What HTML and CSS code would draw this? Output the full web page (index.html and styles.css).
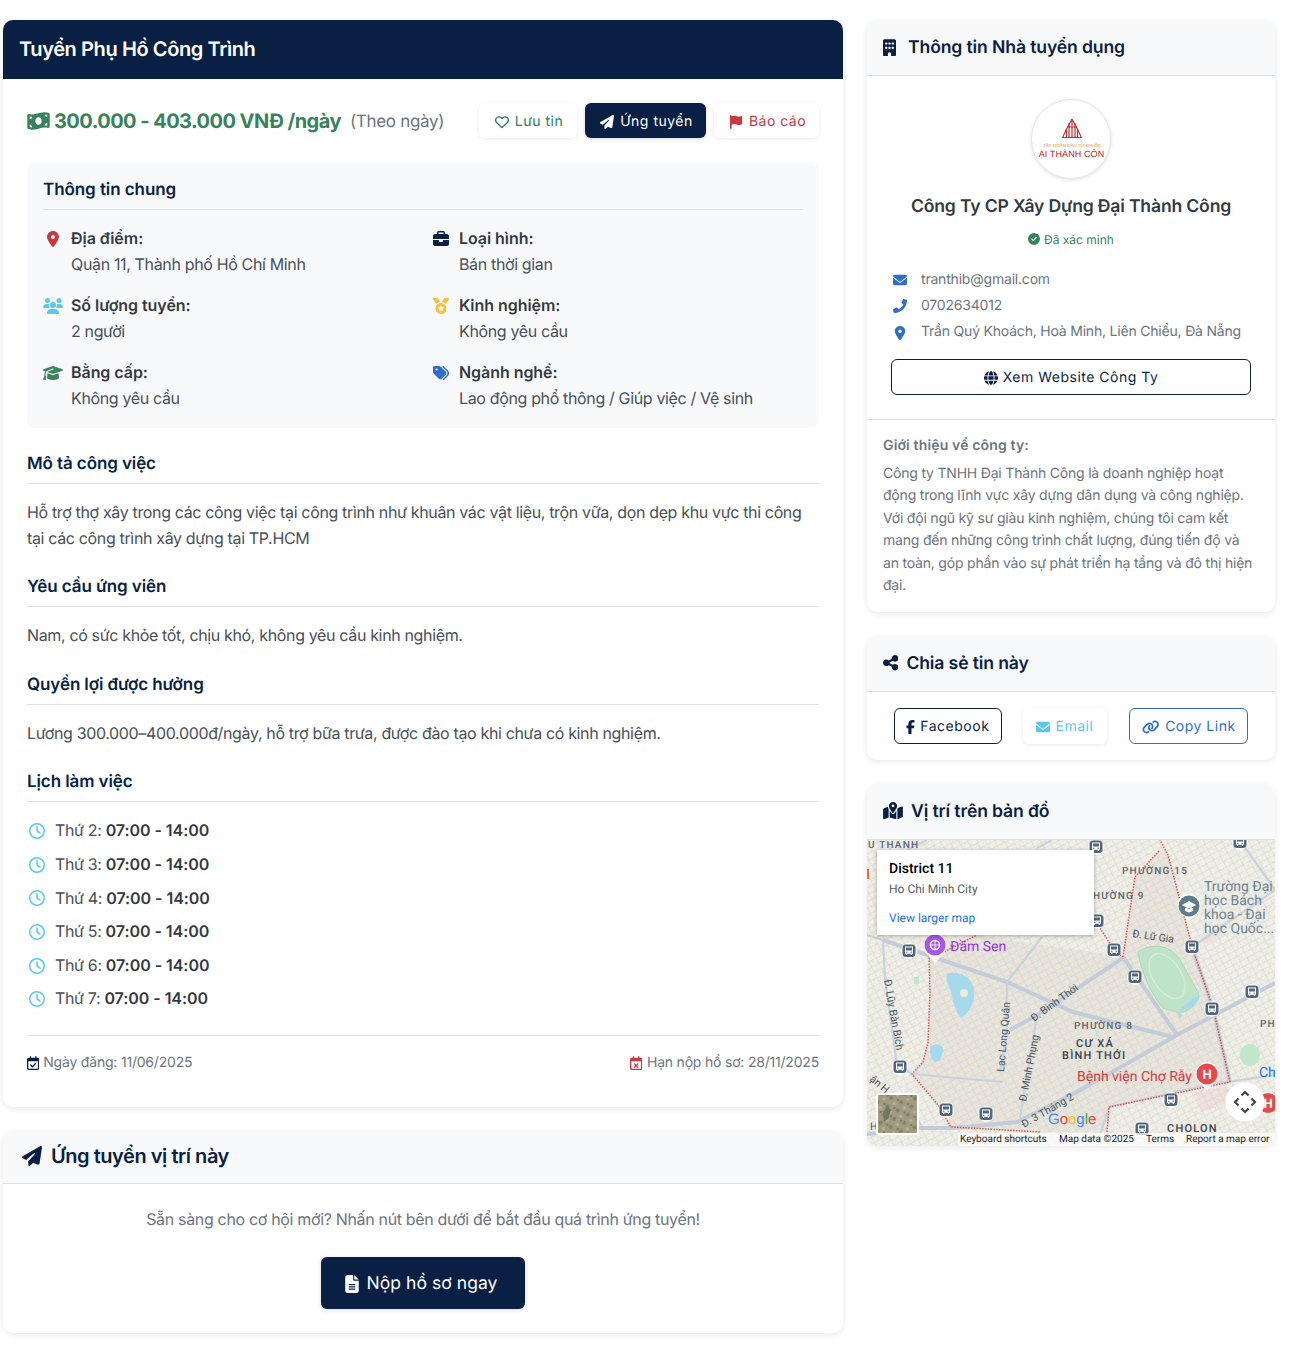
FILE: index.html
```html
<!DOCTYPE html>
<html lang="vi">
<head>
<meta charset="utf-8">
<title>Tuyển Phụ Hồ Công Trình</title>
<link rel="stylesheet" href="styles.css">
</head>
<body>
<svg class="sprite" aria-hidden="true">
<symbol id="i-pin" viewBox="0 0 384 512"><path d="M215.7 499.2C267 435 384 279.4 384 192C384 86 298 0 192 0S0 86 0 192c0 87.4 117 243 168.3 307.2c12.3 15.3 35.1 15.3 47.4 0zM192 128a64 64 0 1 1 0 128 64 64 0 1 1 0-128z"/></symbol>
<symbol id="i-plane" viewBox="0 0 512 512"><path d="M498.1 5.6c10.1 7 15.4 19.1 13.5 31.2l-64 416c-1.5 9.7-7.4 18.2-16 23s-18.9 5.4-28 1.6L284 427.7l-68.5 74.1c-8.9 9.7-22.9 12.9-35.2 8.1S160 493.2 160 480V396.4c0-4 1.5-7.8 4.2-10.7L331.8 202.8c5.8-6.3 5.6-16-.4-22s-15.7-6.4-22-.7L106 360.8 17.7 316.6C7.1 311.3 .3 300.7 0 288.9s5.9-22.8 16.1-28.7l448-256c10.7-6.1 23.9-5.5 34 1.4z"/></symbol>
<symbol id="i-heart" viewBox="0 0 512 512"><path d="M225.8 468.2l-2.5-2.3L48.1 303.2C17.4 274.7 0 234.7 0 192.8v-3.3c0-70.4 50-130.8 119.2-144C158.6 37.9 198.9 47 231 69.6c9 6.4 17.4 13.8 25 22.3c4.2-4.8 8.7-9.2 13.5-13.3c3.7-3.2 7.5-6.2 11.5-9C313.1 47 353.4 37.9 392.8 45.4C462 58.6 512 119.1 512 189.5v3.3c0 41.9-17.4 81.9-48.1 110.4L288.7 465.9l-2.5 2.3c-8.2 7.6-19 11.9-30.2 11.9s-22-4.2-30.2-11.9zM239.1 145c-.4-.3-.7-.7-1-1.1l-17.8-20c0 0-.1-.1-.1-.1c-23.1-25.9-58-37.7-92-31.2C81.6 101.5 48 142.1 48 189.5v3.3c0 28.5 11.9 55.8 32.8 75.2L256 430.7 431.2 268c20.9-19.4 32.8-46.7 32.8-75.2v-3.3c0-47.3-33.6-88-80.1-96.9c-34-6.5-69 5.4-92 31.2c0 0 0 0-.1 .1s0 0-.1 .1l-17.8 20c-.3 .4-.7 .7-1 1.1c-4.5 4.5-10.6 7-16.9 7s-12.4-2.5-16.9-7z"/></symbol>
<symbol id="i-flag" viewBox="0 0 448 512"><path d="M64 32C64 14.3 49.7 0 32 0S0 14.3 0 32V64 368 480c0 17.7 14.3 32 32 32s32-14.3 32-32V352l64.3-16.1c41.1-10.3 84.6-5.5 122.5 13.4c44.2 22.1 95.5 24.8 141.7 7.4l34.7-13c12.5-4.7 20.8-16.6 20.8-30V66.1c0-23-24.2-38-44.8-27.7l-9.6 4.8c-46.3 23.2-100.8 23.2-147.1 0c-35.1-17.6-75.4-22-113.5-12.5L64 48V32z"/></symbol>
<symbol id="i-env" viewBox="0 0 512 512"><path d="M48 64C21.5 64 0 85.5 0 112c0 15.1 7.1 29.3 19.2 38.4L236.8 313.6c11.4 8.5 27 8.5 38.4 0L492.8 150.4c12.1-9.1 19.2-23.3 19.2-38.4c0-26.5-21.5-48-48-48H48zM0 176V384c0 35.3 28.7 64 64 64H448c35.3 0 64-28.7 64-64V176L294.4 339.2c-22.8 17.1-54 17.1-76.8 0L0 176z"/></symbol>
<symbol id="i-phone" viewBox="0 0 512 512"><path d="M493.4 24.6l-104-24c-11.3-2.6-22.9 3.3-27.5 13.9l-48 112c-4.2 9.8-1.4 21.3 6.9 28l60.6 49.6c-36 76.7-98.9 140.5-177.2 177.2l-49.6-60.6c-6.8-8.3-18.2-11.1-28-6.9l-112 48C3.9 366.5-2 378.1.6 389.4l24 104C27.1 504.2 36.7 512 48 512c256.1 0 464-207.5 464-464 0-11.2-7.7-20.9-18.6-23.4z"/></symbol>
<symbol id="i-share" viewBox="0 0 448 512"><path d="M352 224c53 0 96-43 96-96s-43-96-96-96s-96 43-96 96c0 4 .2 8 .7 11.9l-94.1 47C145.4 170.2 121.9 160 96 160c-53 0-96 43-96 96s43 96 96 96c25.9 0 49.4-10.2 66.6-26.9l94.1 47c-.5 3.9-.7 7.8-.7 11.9c0 53 43 96 96 96s96-43 96-96s-43-96-96-96c-25.9 0-49.4 10.2-66.6 26.9l-94.1-47c.5-3.9 .7-7.8 .7-11.9s-.2-8-.7-11.9l94.1-47C302.6 213.8 326.1 224 352 224z"/></symbol>
<symbol id="i-fb" viewBox="0 0 320 512"><path d="M80 299.3V512H196V299.3h86.5l18-97.8H196V166.9c0-51.7 20.3-71.5 72.7-71.5c16.3 0 29.4 .4 37 1.2V7.9C291.4 4 256.4 0 236.2 0C129.3 0 80 50.5 80 159.4v42.1H14v97.8H80z"/></symbol>
<symbol id="i-check" viewBox="0 0 512 512"><path d="M256 512A256 256 0 1 0 256 0a256 256 0 1 0 0 512zM369 209L241 337c-9.4 9.4-24.6 9.4-33.9 0l-64-64c-9.4-9.4-9.4-24.6 0-33.9s24.6-9.4 33.9 0l47 47L335 175c9.4-9.4 24.6-9.4 33.9 0s9.4 24.6 0 33.9z"/></symbol>
<symbol id="i-clock" viewBox="0 0 512 512"><path d="M464 256A208 208 0 1 1 48 256a208 208 0 1 1 416 0zM0 256a256 256 0 1 0 512 0A256 256 0 1 0 0 256zM232 120V256c0 8 4 15.5 10.7 20l96 64c11 7.4 25.9 4.4 33.3-6.7s4.4-25.9-6.7-33.3L280 243.2V120c0-13.3-10.7-24-24-24s-24 10.7-24 24z"/></symbol>
<symbol id="i-file" viewBox="0 0 384 512"><path d="M64 0C28.7 0 0 28.7 0 64V448c0 35.3 28.7 64 64 64H320c35.3 0 64-28.7 64-64V160H256c-17.7 0-32-14.3-32-32V0H64zM256 0V128H384L256 0zM112 256H272c8.8 0 16 7.2 16 16s-7.2 16-16 16H112c-8.8 0-16-7.2-16-16s7.2-16 16-16zm0 64H272c8.8 0 16 7.2 16 16s-7.2 16-16 16H112c-8.8 0-16-7.2-16-16s7.2-16 16-16zm0 64H272c8.8 0 16 7.2 16 16s-7.2 16-16 16H112c-8.8 0-16-7.2-16-16s7.2-16 16-16z"/></symbol>
<symbol id="i-building" viewBox="0 0 384 512"><path d="M48 0C21.5 0 0 21.5 0 48V464c0 26.5 21.5 48 48 48h96V432c0-26.5 21.5-48 48-48s48 21.5 48 48v80h96c26.5 0 48-21.5 48-48V48c0-26.5-21.5-48-48-48H48zM64 240c0-8.8 7.2-16 16-16h32c8.8 0 16 7.2 16 16v32c0 8.8-7.2 16-16 16H80c-8.8 0-16-7.2-16-16V240zm112-16h32c8.8 0 16 7.2 16 16v32c0 8.8-7.2 16-16 16H176c-8.8 0-16-7.2-16-16V240c0-8.8 7.2-16 16-16zm80 16c0-8.8 7.2-16 16-16h32c8.8 0 16 7.2 16 16v32c0 8.8-7.2 16-16 16H272c-8.8 0-16-7.2-16-16V240zM80 96h32c8.8 0 16 7.2 16 16v32c0 8.8-7.2 16-16 16H80c-8.8 0-16-7.2-16-16V112c0-8.8 7.2-16 16-16zm80 16c0-8.8 7.2-16 16-16h32c8.8 0 16 7.2 16 16v32c0 8.8-7.2 16-16 16H176c-8.8 0-16-7.2-16-16V112zM272 96h32c8.8 0 16 7.2 16 16v32c0 8.8-7.2 16-16 16H272c-8.8 0-16-7.2-16-16V112c0-8.8 7.2-16 16-16z"/></symbol>
<symbol id="i-case" viewBox="0 0 512 512"><path d="M184 48H328c4.4 0 8 3.6 8 8V96H176V56c0-4.4 3.6-8 8-8zm-56 8V96H64C28.7 96 0 124.7 0 160v96H192 320 512V160c0-35.3-28.7-64-64-64H384V56c0-30.9-25.1-56-56-56H184c-30.9 0-56 25.1-56 56zM512 288H320v32c0 17.7-14.3 32-32 32H224c-17.7 0-32-14.3-32-32V288H0V416c0 35.3 28.7 64 64 64H448c35.3 0 64-28.7 64-64V288z"/></symbol>
<symbol id="i-users" viewBox="0 0 640 512"><path d="M144 0a80 80 0 1 1 0 160A80 80 0 1 1 144 0zM512 0a80 80 0 1 1 0 160A80 80 0 1 1 512 0zM0 298.7C0 239.8 47.8 192 106.7 192h42.7c15.9 0 31 3.5 44.6 9.7c-1.3 7.2-1.9 14.7-1.9 22.3c0 38.2 16.8 72.5 43.3 96c-.2 0-.4 0-.7 0H21.3C9.6 320 0 310.4 0 298.7zM405.3 320c-.2 0-.4 0-.7 0c26.6-23.5 43.3-57.8 43.3-96c0-7.6-.7-15-1.9-22.3c13.6-6.3 28.7-9.7 44.6-9.7h42.7C592.2 192 640 239.8 640 298.7c0 11.8-9.6 21.3-21.3 21.3H405.3zM224 224a96 96 0 1 1 192 0 96 96 0 1 1 -192 0zM128 485.3C128 411.7 187.7 352 261.3 352H378.7C452.3 352 512 411.7 512 485.3c0 14.7-11.9 26.7-26.7 26.7H154.7c-14.7 0-26.7-11.9-26.7-26.7z"/></symbol>
<symbol id="i-grad" viewBox="0 0 640 512"><path d="M320 32c-8.1 0-16.1 1.4-23.7 4.1L15.8 137.4C6.3 140.9 0 149.9 0 160s6.3 19.1 15.8 22.6l57.9 20.9C57.3 229.3 48 259.8 48 291.9v28.1c0 28.4-10.8 57.7-22.3 80.8c-6.5 13-13.9 25.8-22.5 37.6C0 442.7-.9 448.3 .9 453.4s6 8.9 11.2 10.2l64 16c4.2 1.1 8.7 .3 12.4-2s6.3-6.1 7.1-10.4c8.6-42.8 4.3-81.2-2.1-108.7C90.3 344.3 86 329.8 80 316.5V291.9c0-30.2 10.2-58.7 27.9-81.5c12.9-15.5 29.6-28 49.2-35.7l157-61.7c8.2-3.2 17.5 .8 20.7 9s-.8 17.5-9 20.7l-157 61.7c-12.4 4.9-23.3 12.4-32.2 21.6l159.6 57.6c7.6 2.7 15.6 4.1 23.7 4.1s16.1-1.4 23.7-4.1L624.2 182.6c9.5-3.4 15.8-12.5 15.8-22.6s-6.3-19.1-15.8-22.6L343.7 36.1C336.1 33.4 328.1 32 320 32zM128 408c0 35.3 86 72 192 72s192-36.7 192-72L496.7 262.6 354.5 314c-11.1 4-22.8 6-34.5 6s-23.5-2-34.5-6L143.3 262.6 128 408z"/></symbol>
<symbol id="i-tags" viewBox="0 0 512 512"><path d="M345 39.1L472.8 168.4c52.4 53 52.4 138.2 0 191.2L360.8 472.9c-9.3 9.4-24.5 9.5-33.9 .2s-9.5-24.5-.2-33.9L438.6 325.9c33.9-34.3 33.9-89.4 0-123.7L310.9 72.9c-9.3-9.4-9.2-24.6 .2-33.9s24.6-9.2 33.9 .2zM0 229.5V80C0 53.5 21.5 32 48 32H197.5c17 0 33.3 6.7 45.3 18.7l168 168c25 25 25 65.5 0 90.5L277.3 442.7c-25 25-65.5 25-90.5 0l-168-168C6.7 262.7 0 246.5 0 229.5zM144 144a32 32 0 1 0 -64 0 32 32 0 1 0 64 0z"/></symbol>
<symbol id="i-medal" viewBox="0 0 512 512"><path d="M4.1 38.2C1.4 34.2 0 29.4 0 24.6C0 11 11 0 24.6 0H133.9c11.2 0 21.7 5.9 27.4 15.5l68.5 114.1c-48.2 6.1-91.3 28.6-123.4 61.9L4.1 38.2zm503.7 0L405.6 191.5c-32.1-33.3-75.2-55.8-123.4-61.9L350.7 15.5C356.5 5.9 366.9 0 378.1 0H487.4C501 0 512 11 512 24.6c0 4.8-1.4 9.6-4.1 13.6zM80 336a176 176 0 1 1 352 0A176 176 0 1 1 80 336zm184.4-94.9c-3.4-7-13.3-7-16.8 0l-22.4 45.4c-1.4 2.8-4 4.7-7 5.1L168 298.9c-7.7 1.1-10.7 10.5-5.2 16l36.3 35.4c2.2 2.2 3.2 5.2 2.7 8.3l-8.6 49.9c-1.3 7.6 6.7 13.5 13.6 9.9l44.8-23.6c2.7-1.4 6-1.4 8.7 0l44.8 23.6c6.9 3.6 14.9-2.2 13.6-9.9l-8.6-49.9c-.5-3 .5-6.1 2.7-8.3l36.3-35.4c5.6-5.4 2.5-14.8-5.2-16l-50.1-7.3c-3-.4-5.7-2.4-7-5.1l-22.4-45.4z"/></symbol>
<symbol id="i-money" viewBox="0 0 576 512"><path d="M0 112.5V422.3c0 18 10.1 35 27 41.3c87 32.5 174 10.3 261-11.9c79.8-20.3 159.6-40.7 239.3-18.9c23 6.3 48.7-9.5 48.7-33.4V89.7c0-18-10.1-35-27-41.3C462 15.9 375 38.1 288 60.3C208.2 80.6 128.4 100.9 48.7 79.1C25.6 72.8 0 88.6 0 112.5zM288 352c-44.2 0-80-43-80-96s35.8-96 80-96s80 43 80 96s-35.8 96-80 96zM64 352c35.3 0 64 28.7 64 64H64V352zm64-208c0 35.3-28.7 64-64 64V144h64zM512 304v64H448c0-35.3 28.7-64 64-64zM448 96h64v64c-35.3 0-64-28.7-64-64z"/></symbol>
<symbol id="i-calcheck" viewBox="0 0 448 512"><path d="M128 0c13.3 0 24 10.7 24 24V64H296V24c0-13.3 10.7-24 24-24s24 10.7 24 24V64h40c35.3 0 64 28.7 64 64v16 48V448c0 35.3-28.7 64-64 64H64c-35.3 0-64-28.7-64-64V192 144 128C0 92.7 28.7 64 64 64h40V24c0-13.3 10.7-24 24-24zM400 192H48V448c0 8.8 7.2 16 16 16H384c8.8 0 16-7.2 16-16V192zM329 297L217 409c-9.4 9.4-24.6 9.4-33.9 0l-64-64c-9.4-9.4-9.4-24.6 0-33.9s24.6-9.4 33.9 0l47 47 95-95c9.4-9.4 24.6-9.4 33.9 0s9.4 24.6 0 33.9z"/></symbol>
<symbol id="i-calx" viewBox="0 0 448 512"><path d="M128 0c13.3 0 24 10.7 24 24V64H296V24c0-13.3 10.7-24 24-24s24 10.7 24 24V64h40c35.3 0 64 28.7 64 64v16 48V448c0 35.3-28.7 64-64 64H64c-35.3 0-64-28.7-64-64V192 144 128C0 92.7 28.7 64 64 64h40V24c0-13.3 10.7-24 24-24zM400 192H48V448c0 8.8 7.2 16 16 16H384c8.8 0 16-7.2 16-16V192zM305 305c9.4-9.4 9.4-24.6 0-33.9s-24.6-9.4-33.9 0l-47 47-47-47c-9.4-9.4-24.6-9.4-33.9 0s-9.4 24.6 0 33.9l47 47-47 47c-9.4 9.4-9.4 24.6 0 33.9s24.6 9.4 33.9 0l47-47 47 47c9.4 9.4 24.6 9.4 33.9 0s9.4-24.6 0-33.9l-47-47 47-47z"/></symbol>
<symbol id="i-globe" viewBox="0 0 512 512"><path d="M352 256c0 22.2-1.2 43.6-3.3 64H163.3c-2.2-20.4-3.3-41.8-3.3-64s1.2-43.6 3.3-64H348.7c2.2 20.4 3.3 41.8 3.3 64zm28.8-64H503.9c5.3 20.5 8.1 41.9 8.1 64s-2.8 43.5-8.1 64H380.8c2.1-20.6 3.2-42 3.2-64s-1.1-43.4-3.2-64zm112.6-32H376.7c-10-63.9-29.8-117.4-55.3-151.6c78.3 20.7 142 77.5 171.9 151.6zm-149.1 0H167.7c6.1-36.4 15.5-68.6 27-94.7c10.5-23.6 22.2-40.7 33.5-51.5C239.4 3.2 248.7 0 256 0s16.6 3.2 27.8 13.8c11.3 10.8 23 27.9 33.5 51.5c11.6 26 20.9 58.2 27 94.7zm-209 0H18.6C48.6 85.9 112.2 29.1 190.6 8.4C165.1 42.6 145.3 96.1 135.3 160zM8.1 192H131.2c-2.1 20.6-3.2 42-3.2 64s1.1 43.4 3.2 64H8.1C2.8 299.5 0 278.1 0 256s2.8-43.5 8.1-64zM194.7 446.6c-11.6-26-20.9-58.2-27-94.6H344.3c-6.1 36.4-15.5 68.6-27 94.6c-10.5 23.6-22.2 40.7-33.5 51.5C272.6 508.8 263.3 512 256 512s-16.6-3.2-27.8-13.8c-11.3-10.8-23-27.9-33.5-51.5zM135.3 352c10 63.9 29.8 117.4 55.3 151.6C112.2 482.9 48.6 426.1 18.6 352H135.3zm358.1 0c-30 74.1-93.6 130.9-171.9 151.6c25.5-34.2 45.2-87.7 55.3-151.6H493.4z"/></symbol>
<symbol id="i-link" viewBox="0 0 640 512"><path d="M579.8 267.7c56.5-56.5 56.5-148 0-204.5c-50-50-128.8-56.5-186.3-15.4l-1.6 1.1c-14.4 10.3-17.7 30.3-7.4 44.6s30.3 17.7 44.6 7.4l1.6-1.1c32.1-22.9 76-19.3 103.8 8.6c31.5 31.5 31.5 82.5 0 114L422.3 334.8c-31.5 31.5-82.5 31.5-114 0c-27.9-27.9-31.5-71.8-8.6-103.8l1.1-1.6c10.3-14.4 6.9-34.4-7.4-44.6s-34.4-6.9-44.6 7.4l-1.1 1.6C206.5 251.2 213 330 263 380c56.5 56.5 148 56.5 204.5 0L579.8 267.7zM60.2 244.3c-56.5 56.5-56.5 148 0 204.5c50 50 128.8 56.5 186.3 15.4l1.6-1.1c14.4-10.3 17.7-30.3 7.4-44.6s-30.3-17.7-44.6-7.4l-1.6 1.1c-32.1 22.9-76 19.3-103.8-8.6C74 372 74 321 105.5 289.5L217.7 177.2c31.5-31.5 82.5-31.5 114 0c27.9 27.9 31.5 71.8 8.6 103.9l-1.1 1.6c-10.3 14.4-6.9 34.4 7.4 44.6s34.4 6.9 44.6-7.4l1.1-1.6C433.5 260.8 427 182 377 132c-56.5-56.5-148-56.5-204.5 0L60.2 244.3z"/></symbol>
<symbol id="i-map" viewBox="0 0 576 512"><path d="M408 120c0 54.6-73.1 151.9-105.2 192c-7.7 9.6-22 9.6-29.6 0C241.1 271.9 168 174.6 168 120C168 53.7 221.7 0 288 0s120 53.7 120 120zm8 80.4c3.5-6.9 6.7-13.8 9.6-20.6c.5-1.2 1-2.5 1.5-3.7l116-46.4C558.9 123.4 576 135 576 152V422.8c0 9.8-6 18.6-15.1 22.3L416 503V200.4zM137.6 138.3c2.4 14.1 7.2 28.3 12.8 41.5c2.9 6.8 6.1 13.7 9.6 20.6V451.8L32.9 502.7C17.1 509 0 497.4 0 480.4V209.6c0-9.8 6-18.6 15.1-22.3l122.6-49zM327.8 332c13.9-17.4 35.7-45.7 56.2-77V504.3L192 449.4V255c20.5 31.3 42.3 59.6 56.2 77c20.5 25.6 59.1 25.6 79.6 0zM288 152a40 40 0 1 0 0-80 40 40 0 1 0 0 80z"/></symbol>
<symbol id="m-bus" viewBox="-8 -8 16 16" overflow="visible"><circle r="8" fill="#fff" opacity=".8"/><rect x="-6.500" y="-6.500" width="13" height="12.500" rx="3.500" fill="#53667f"/><path d="M-4-4.500H4V2.800H3V4H1.800V2.800H-1.800V4H-3V2.800H-4Z" fill="#fff"/><rect x="-3" y="-3.500" width="6" height="3" fill="#53667f"/><circle cx="-2.200" cy="1.300" r=".7" fill="#53667f"/><circle cx="2.200" cy="1.300" r=".7" fill="#53667f"/></symbol>
</svg>

<main class="page">
  <div class="col">
    <section class="card job">
      <h1 class="job-title">Tuyển Phụ Hồ Công Trình</h1>
      <div class="job-body">
        <div class="price-row">
          <div class="price-wrap">
            <svg class="ic ic-money"><use href="#i-money"/></svg>
            <span class="price">300.000 - 403.000 VNĐ /ngày</span>
            <span class="price-type">(Theo ngày)</span>
          </div>
          <div class="actions">
            <a class="btn btn-ghost btn-save"><svg class="ic"><use href="#i-heart"/></svg>Lưu tin</a>
            <a class="btn btn-dark"><svg class="ic"><use href="#i-plane"/></svg>Ứng tuyển</a>
            <a class="btn btn-ghost btn-report"><svg class="ic"><use href="#i-flag"/></svg>Báo cáo</a>
          </div>
        </div>

        <div class="panel">
          <h2 class="panel-title">Thông tin chung</h2>
          <div class="facts">
            <div class="fact"><span class="fact-ic red"><svg class="ic"><use href="#i-pin"/></svg></span><div><b>Địa điểm:</b><br>Quận 11, Thành phố Hồ Chí Minh</div></div>
            <div class="fact"><span class="fact-ic navy"><svg class="ic"><use href="#i-case"/></svg></span><div><b>Loại hình:</b><br>Bán thời gian</div></div>
            <div class="fact"><span class="fact-ic sky"><svg class="ic ic-wide"><use href="#i-users"/></svg></span><div><b>Số lượng tuyển:</b><br>2 người</div></div>
            <div class="fact"><span class="fact-ic gold"><svg class="ic"><use href="#i-medal"/></svg></span><div><b>Kinh nghiệm:</b><br>Không yêu cầu</div></div>
            <div class="fact"><span class="fact-ic green"><svg class="ic ic-wide"><use href="#i-grad"/></svg></span><div><b>Bằng cấp:</b><br>Không yêu cầu</div></div>
            <div class="fact"><span class="fact-ic blue"><svg class="ic"><use href="#i-tags"/></svg></span><div><b>Ngành nghề:</b><br>Lao động phổ thông / Giúp việc / Vệ sinh</div></div>
          </div>
        </div>

        <h3 class="sec-title">Mô tả công việc</h3>
        <p class="sec-text">Hỗ trợ thợ xây trong các công việc tại công trình như khuân vác vật liệu, trộn vữa, dọn dẹp khu vực thi công tại các công trình xây dựng tại TP.HCM</p>
        <h3 class="sec-title">Yêu cầu ứng viên</h3>
        <p class="sec-text">Nam, có sức khỏe tốt, chịu khó, không yêu cầu kinh nghiệm.</p>
        <h3 class="sec-title">Quyền lợi được hưởng</h3>
        <p class="sec-text">Lương 300.000–400.000đ/ngày, hỗ trợ bữa trưa, được đào tạo khi chưa có kinh nghiệm.</p>
        <h3 class="sec-title">Lịch làm việc</h3>
        <ul class="schedule">
          <li><svg class="ic"><use href="#i-clock"/></svg>Thứ 2:&nbsp;<b>07:00 - 14:00</b></li>
          <li><svg class="ic"><use href="#i-clock"/></svg>Thứ 3:&nbsp;<b>07:00 - 14:00</b></li>
          <li><svg class="ic"><use href="#i-clock"/></svg>Thứ 4:&nbsp;<b>07:00 - 14:00</b></li>
          <li><svg class="ic"><use href="#i-clock"/></svg>Thứ 5:&nbsp;<b>07:00 - 14:00</b></li>
          <li><svg class="ic"><use href="#i-clock"/></svg>Thứ 6:&nbsp;<b>07:00 - 14:00</b></li>
          <li><svg class="ic"><use href="#i-clock"/></svg>Thứ 7:&nbsp;<b>07:00 - 14:00</b></li>
        </ul>
        <div class="dates">
          <span class="date"><svg class="ic navy"><use href="#i-calcheck"/></svg>Ngày đăng: 11/06/2025</span>
          <span class="date date-end"><svg class="ic red"><use href="#i-calx"/></svg>Hạn nộp hồ sơ: 28/11/2025</span>
        </div>
      </div>
    </section>

    <section class="card apply">
      <header class="card-head head-apply"><svg class="ic"><use href="#i-plane"/></svg><h2>Ứng tuyển vị trí này</h2></header>
      <div class="apply-body">
        <p>Sẵn sàng cho cơ hội mới? Nhấn nút bên dưới để bắt đầu quá trình ứng tuyển!</p>
        <a class="btn btn-dark btn-lg"><svg class="ic"><use href="#i-file"/></svg>Nộp hồ sơ ngay</a>
      </div>
    </section>
  </div>

  <aside class="col">
    <section class="card">
      <header class="card-head"><svg class="ic ic-b"><use href="#i-building"/></svg><h2>Thông tin Nhà tuyển dụng</h2></header>
      <div class="company">
        <div class="logo">
          <svg viewBox="0 0 78 78" class="logo-svg">
            <g fill="none" stroke="#b9312f" stroke-width="1.200">
              <path d="M40 19C37 25 33 31 31 37M40 19C43 25 47 31 49 37"/>
              <path d="M37 23V37M40 20V37M43 23V37M34.500 29V37M45.500 29V37"/>
              <path d="M30 37.500H50M35 27H45"/>
            </g>
            <text x="40" y="47" class="logo-small">TẬP ĐOÀN ĐẦU TƯ ĐỊA ỐC</text>
            <text x="39.500" y="56.500" class="logo-big">ẠI THÀNH CÔN</text>
          </svg>
        </div>
        <h3 class="co-name">Công Ty CP Xây Dựng Đại Thành Công</h3>
        <p class="verified"><svg class="ic"><use href="#i-check"/></svg>Đã xác minh</p>
        <ul class="contacts">
          <li><svg class="ic"><use href="#i-env"/></svg>tranthib@gmail.com</li>
          <li><svg class="ic"><use href="#i-phone"/></svg>0702634012</li>
          <li><svg class="ic"><use href="#i-pin"/></svg>Trần Quý Khoách, Hoà Minh, Liên Chiểu, Đà Nẵng</li>
        </ul>
        <a class="btn btn-line btn-site"><svg class="ic"><use href="#i-globe"/></svg>Xem Website Công Ty</a>
      </div>
      <div class="about">
        <h4>Giới thiệu về công ty:</h4>
        <p>Công ty TNHH Đại Thành Công là doanh nghiệp hoạt động trong lĩnh vực xây dựng dân dụng và công nghiệp. Với đội ngũ kỹ sư giàu kinh nghiệm, chúng tôi cam kết mang đến những công trình chất lượng, đúng tiến độ và an toàn, góp phần vào sự phát triển hạ tầng và đô thị hiện đại.</p>
      </div>
    </section>

    <section class="card">
      <header class="card-head"><svg class="ic ic-s"><use href="#i-share"/></svg><h2>Chia sẻ tin này</h2></header>
      <div class="share">
        <a class="btn btn-line btn-fb"><svg class="ic"><use href="#i-fb"/></svg>Facebook</a>
        <a class="btn btn-ghost btn-mail"><svg class="ic"><use href="#i-env"/></svg>Email</a>
        <a class="btn btn-line btn-copy"><svg class="ic ic-l"><use href="#i-link"/></svg>Copy Link</a>
      </div>
    </section>

    <section class="card">
      <header class="card-head"><svg class="ic ic-m"><use href="#i-map"/></svg><h2>Vị trí trên bản đồ</h2></header>
      <div class="map">
        <svg class="map-svg" viewBox="0 0 408 306">
          <defs>
            <pattern id="st1" width="8" height="6" patternUnits="userSpaceOnUse" patternTransform="rotate(-28)"><path d="M0 0H8M0 0V6" stroke="#bfd0e0" stroke-width=".8" fill="none"/></pattern>
            <pattern id="st2" width="6" height="9" patternUnits="userSpaceOnUse" patternTransform="rotate(12)"><path d="M0 0H6M0 0V9" stroke="#c8d6e2" stroke-width=".7" fill="none"/></pattern>
            <pattern id="sat" width="11" height="9" patternUnits="userSpaceOnUse" patternTransform="rotate(23)"><rect width="11" height="9" fill="#a09a80"/><circle cx="2" cy="3" r="2" fill="#857f63"/><circle cx="7" cy="7" r="1.600" fill="#bcb49c"/><circle cx="9" cy="2" r="1" fill="#6f7058"/></pattern>
          </defs>
          <rect width="408" height="306" fill="#f4efe3"/>
          <path class="beige" d="M62 115L63 152L61 202L56 222L45 234L71 265L84 287L173 292L240 292L242 267L363 242L346 168L326 110L301 15L293 10L268 37L256 117L110 95Z"/>
          <path class="pink" d="M328 252L360 246L366 262L334 272ZM334 96L352 88L356 96L338 104Z"/>
          <rect width="408" height="306" fill="url(#st1)"/>
          <rect width="408" height="306" fill="url(#st2)" opacity=".75"/>
          <path class="park" d="M271 112C285 103 300 104 312 118L331 152C334 160 326 170 312 173L296 168C285 155 275 135 271 112Z"/>
          <ellipse class="track" cx="300" cy="136" rx="14" ry="25" transform="rotate(-32 300 136)"/>
          <path class="water" d="M312 170C318 164 326 158 333 155C331 164 322 170 312 170ZM311 173L316 175L312 179Z"/>
          <path class="water" d="M80 134C90 130 103 136 106 146C110 158 104 172 94 178C88 172 86 160 84 152C82 146 78 140 80 134Z"/>
          <circle cx="97" cy="153" r="4" fill="#f0ebdf"/>
          <path class="water" d="M64 206C68 203 76 204 76 210C76 216 72 222 68 222C63 218 62 212 64 206Z"/>
          <path class="water" d="M38 242L50 282L58 290L44 266Z"/>
          <path class="green-dot" d="M47 137H52V144H47ZM229 191H232V197H229Z"/>
          <ellipse class="green-dot" cx="383" cy="215" rx="10" ry="11"/>
          <g class="road">
            <path d="M408 143L310 195L210 252L150 282L86 288L53 288L-7 295"/>
            <path d="M256 117L310 195"/>
            <path d="M143 190L170 175L256 118"/>
            <path d="M16 100L140 142L206 172L306 197"/>
            <path d="M326 110L346 168L363 242"/>
          </g>
          <g class="road-sm">
            <path d="M0 95L16 100L18 138L30 225L45 234"/>
            <path d="M140 142L140 192L133 232"/>
            <path d="M170 175L153 278"/>
            <path d="M136 242L45 234"/>
            <path d="M140 142L175 97"/>
            <path d="M325 107L408 50"/>
            <path d="M373 0L408 50"/>
            <path d="M408 235L340 245L242 267L230 305"/>
            <path d="M40 10L60 0M170 8L185 0"/>
          </g>
          <g class="boundary">
            <path d="M62 115L63 152L61 202L56 222L45 234L71 265L84 287L173 292"/>
            <path d="M240 292L242 267L363 242"/>
            <path d="M363 242L346 168L326 110L301 15L293 0"/>
            <path d="M256 117L268 37L293 10"/>
            <path d="M233 88L247 110L256 117"/>
            <path d="M75 113L110 95"/>
          </g>
          <use href="#m-bus" x="221" y="-1" width="16" height="16"/>
          <use href="#m-bus" x="365" y="-6" width="16" height="16"/>
          <use href="#m-bus" x="222" y="73" width="16" height="16"/>
          <use href="#m-bus" x="239" y="102" width="16" height="16"/>
          <use href="#m-bus" x="317" y="99" width="16" height="16"/>
          <use href="#m-bus" x="260" y="129" width="16" height="16"/>
          <use href="#m-bus" x="377" y="144" width="16" height="16"/>
          <use href="#m-bus" x="337" y="161" width="16" height="16"/>
          <use href="#m-bus" x="34" y="103" width="16" height="16"/>
          <use href="#m-bus" x="25" y="219" width="16" height="16"/>
          <use href="#m-bus" x="71" y="262" width="16" height="16"/>
          <use href="#m-bus" x="111" y="266" width="16" height="16"/>
          <use href="#m-bus" x="296" y="252" width="16" height="16"/>
          <use href="#m-bus" x="267" y="281" width="16" height="16"/>
          <text class="t-area" x="1" y="8">U THANH</text>
          <text class="t-area" x="255" y="34">PHƯỜNG 15</text>
          <text class="t-area" x="226" y="59">HƯỜNG 9</text>
          <text class="t-area" x="207" y="189">PHƯỜNG 8</text>
          <text class="t-area t-dark" x="209" y="207">CƯ XÁ</text>
          <text class="t-area t-dark" x="195" y="219">BÌNH THỚI</text>
          <text class="t-area t-dark" x="300" y="292">CHOLON</text>
          <text class="t-area" x="393" y="187">PH</text>
          <g class="t-poi">
            <text x="337" y="51">Trường Đại</text>
            <text x="337" y="65">học Bách</text>
            <text x="337" y="79">khoa - Đại</text>
            <text x="337" y="93">học Quốc...</text>
          </g>
          <text class="t-st" transform="translate(265 97) rotate(8)">Đ. Lữ Gia</text>
          <text class="t-st" transform="translate(17 140) rotate(80)">Đ. Lũy Bàn Bích</text>
          <text class="t-st" transform="translate(137 232) rotate(-85)">Lạc Long Quân</text>
          <text class="t-st" transform="translate(159 262) rotate(-79)">Đ. Minh Phụng</text>
          <text class="t-st" transform="translate(167 182) rotate(-36)">Đ. Bình Thời</text>
          <text class="t-st" transform="translate(157 288) rotate(-30)">Đ. 3 Tháng 2</text>
          <text class="t-st" transform="translate(2 240) rotate(40)">ận H</text>
          <text class="t-st" x="3" y="290">H</text>
          <text class="t-purple" x="83" y="111">Đầm Sen</text>
          <text class="t-red" x="210" y="241">Bệnh viện Chợ Rẫy</text>
          <text class="t-ch" x="392" y="237">Ch</text>
          <path d="M68 123L60 114A11.500 11.500 0 1 1 76 114Z" fill="#fff"/>
          <circle cx="68" cy="105" r="10.500" fill="#a855e8"/>
          <circle cx="68" cy="105" r="4.500" fill="none" stroke="#fff" stroke-width="1.500"/>
          <path d="M68 100V110M63 105H73" stroke="#fff" stroke-width=".8"/>
          <path d="M322 81L314 73A11.500 11.500 0 1 1 330 73Z" fill="#fff"/>
          <circle cx="322" cy="66" r="10.500" fill="#5f7c8a"/>
          <path d="M315 65L322 61L329 65L322 69ZM318 68V71L322 72.500L326 71V68" fill="#fff"/>
          <path d="M340 250L332 242A11.500 11.500 0 1 1 348 242Z" fill="#fff"/>
          <circle cx="340" cy="234" r="10.500" fill="#e5484d"/>
          <text class="t-h" x="340" y="238.500">H</text>
          <circle cx="401" cy="263" r="10.500" fill="#e5484d" stroke="#fff" stroke-width="1"/>
          <text class="t-h" x="401" y="267.500">H</text>
          <rect x="0" y="29" width="2" height="10" fill="#e8722c"/>
          <rect x="10" y="254" width="41" height="40" rx="2" fill="url(#sat)" stroke="#fff" stroke-width="2"/>
          <path d="M16 272L20 266L24 270L21 279L17 282Z" fill="#6f7a58"/>
          <text class="t-google" x="181" y="284"><tspan fill="#4285f4">G</tspan><tspan fill="#ea4335">o</tspan><tspan fill="#fbbc05">o</tspan><tspan fill="#4285f4">g</tspan><tspan fill="#34a853">l</tspan><tspan fill="#ea4335">e</tspan></text>
          <rect x="91" y="293" width="317" height="13" fill="#fff" opacity=".72"/>
          <text class="t-foot" x="93" y="302">Keyboard shortcuts</text>
          <text class="t-foot" x="192" y="302">Map data ©2025</text>
          <text class="t-foot" x="279" y="302">Terms</text>
          <text class="t-foot" x="319" y="302">Report a map error</text>
          <circle cx="378" cy="262" r="19.500" fill="#fff"/>
          <path d="M374.500 255.500L378 252L381.500 255.500M374.500 268.500L378 272L381.500 268.500M371.500 258.500L368 262L371.500 265.500M384.500 258.500L388 262L384.500 265.500" fill="none" stroke="#444" stroke-width="2.200"/>
        </svg>
        <div class="map-info">
          <strong>District 11</strong>
          <span>Ho Chi Minh City</span>
          <a>View larger map</a>
        </div>
      </div>
    </section>
  </aside>
</main>
</body>
</html>
```

FILE: styles.css
```css
* { box-sizing: border-box; }
html, body { margin: 0; padding: 0; background: #fff; }
body { font-family: Inter, "Noto Sans", sans-serif; font-size: 16px; line-height: 1.6; color: #495057; text-rendering: geometricPrecision; letter-spacing: -0.35px; }
h1, h2, h3, h4, p, ul { margin: 0; padding: 0; }
ul { list-style: none; }
a { text-decoration: none; }
b { font-weight: 600; color: #343a40; letter-spacing: -0.05px; }
.sprite { display: none; }
.ic { width: 1em; height: 1em; fill: currentColor; flex: none; display: inline-block; vertical-align: -0.125em; }

.page { display: grid; grid-template-columns: 840px 408px; column-gap: 24px; padding: 20px 0 19px 3px; align-items: start; }
.col { display: flex; flex-direction: column; gap: 24px; min-width: 0; }
.card { background: #fff; border-radius: 10px; box-shadow: 0 2px 6px rgba(0,0,0,.09); overflow: hidden; }

.job-title { background: #0a1f44; color: #fff; font-size: 20px; font-weight: 600; line-height: 27px; padding: 16px; letter-spacing: -0.4px; }
.job-body { padding: 24px 24px 33px; }
.price-row { display: flex; justify-content: space-between; align-items: center; height: 35px; }
.price-wrap { display: flex; align-items: center; }
.ic-money { width: 23px; height: 20px; color: #38825c; margin-right: 4px; }
.price { font-size: 20px; font-weight: 700; color: #38825c; letter-spacing: -0.55px; }
.price-type { color: #6c757d; margin: 4px 0 0 9px; font-size: 17px; letter-spacing: -0.3px; }
.actions { display: flex; gap: 8px; }

.btn { display: inline-flex; align-items: center; justify-content: center; gap: 6px; font-size: 14px; letter-spacing: .5px; border-radius: 6px; line-height: 22px; white-space: nowrap; }
.btn-ghost { background: #fff; box-shadow: 0 1px 4px rgba(0,0,0,.09); height: 35px; padding: 2px 13px 0 15px; }
.btn-save { color: #2f7d5a; width: 98px; }
.btn-report { color: #c9393f; width: 105px; }
.btn-dark { background: #0a1f44; color: #fff; height: 35px; width: 121px; padding: 2px 0 0 2px; box-shadow: 0 1px 4px rgba(0,0,0,.15); }
.btn-line { border: 1px solid #0a1f44; color: #0a1f44; height: 36px; background: #fff; }

.panel { background: #f8f9fa; border-radius: 8px; margin-top: 24px; padding: 16px; height: 266px; }
.panel-title { font-size: 17px; font-weight: 600; color: #0a1f44; line-height: 21px; padding: 2px 0 8px; border-bottom: 1px solid #dee2e6; letter-spacing: -0.07px; }
.facts { display: grid; grid-template-columns: 372px 372px; column-gap: 16px; row-gap: 16px; margin-top: 16px; }
.fact { display: flex; }
.fact-ic { width: 28px; height: 25.600px; display: flex; align-items: center; justify-content: center; flex: none; padding-right: 8px; font-size: 16px; }
.ic-wide { width: 20px; }
.red { color: #c9393f; }
.navy { color: #0a1f44; }
.sky { color: #5bc8f0; }
.gold { color: #f5c242; }
.green { color: #38825c; }
.blue { color: #2f6fca; }

.sec-title { font-size: 17px; font-weight: 600; color: #0a1f44; line-height: 21px; padding: 2px 0 8px; border-bottom: 1px solid #dee2e6; margin-top: 24px; letter-spacing: -0.1px; }
.sec-text { margin-top: 16px; }
.schedule { margin-top: 16px; }
.schedule li { display: flex; align-items: center; height: 25.600px; margin-bottom: 8px; }
.schedule .ic { color: #5bc8f0; margin: 0 10px 0 2px; }
.dates { display: flex; justify-content: space-between; border-top: 1px solid #dee2e6; margin-top: 23px; padding-top: 16px; font-size: 14px; color: #6c757d; line-height: 22.400px; letter-spacing: -0.2px; }
.date { display: flex; align-items: center; gap: 4px; }
.date-end { gap: 5px; }
.date .ic { width: 12.250px; height: 14px; }

.card-head { display: flex; align-items: center; gap: 12px; background: #f8f9fa; border-bottom: 1px solid #dee2e6; height: 55.600px; padding: 0 16px; color: #0a1f44; }
.card-head h2 { font-size: 17.600px; font-weight: 600; line-height: 1.2; letter-spacing: -0.13px; }
.card-head .ic-b { width: 13px; height: 17.600px; }
.card-head .ic-s { width: 15.400px; height: 17.600px; margin-right: -4px; }
.card-head .ic-m { width: 20px; height: 17.600px; margin-right: -4px; }
.head-apply { height: 52.400px; padding: 0 19px 2px; gap: 9px; }
.head-apply .ic { width: 20px; height: 20px; }
.card-head.head-apply h2 { font-size: 20px; letter-spacing: -0.45px; }

.apply-body { text-align: center; padding: 23.600px 16px; height: 149.600px; }
.apply-body p { color: #6c757d; letter-spacing: -0.33px; }
.btn-lg { width: 204px; height: 52px; margin-top: 24px; padding: 2px 4px 0 0; font-size: 17.500px; letter-spacing: .05px; gap: 8px; border-radius: 6px; }
.btn-lg .ic { width: 14px; height: 18px; }

.company { padding: 23.400px 24px 0; text-align: center; height: 344.400px; border-bottom: 1px solid #dee2e6; }
.logo { width: 80px; height: 80px; margin: 0 auto; border-radius: 50%; border: 1px solid #e6e6e6; box-shadow: 0 1px 4px rgba(0,0,0,.12); overflow: hidden; background: #fff; }
.logo-svg { display: block; width: 78px; height: 78px; }
.logo-small { font-family: "Liberation Sans", sans-serif; font-size: 4.500px; fill: #e0863a; text-anchor: middle; letter-spacing: 0; }
.logo-big { font-family: "Liberation Sans", sans-serif; font-size: 9px; fill: #c21f26; text-anchor: middle; letter-spacing: .1px; }
.co-name { font-size: 17.600px; font-weight: 600; color: #343a40; line-height: 21px; margin-top: 17px; letter-spacing: -0.18px; }
.verified { color: #38825c; font-size: 12px; display: flex; align-items: center; justify-content: center; gap: 4px; margin-top: 13px; line-height: 19px; letter-spacing: 0; }
.contacts { margin-top: 17.600px; text-align: left; font-size: 14px; color: #6c757d; letter-spacing: -0.2px; }
.contacts li { display: flex; align-items: center; height: 26.400px; }
.contacts .ic { color: #2f6fca; margin: 0 14px 0 2px; width: 14px; height: 14px; }
.btn-site { width: 360px; margin: 13.400px 0 0 0; padding-top: 2px; gap: 5px; }
.btn-site .ic { width: 14px; height: 14px; }

.about { padding: 15px 19px 16px 16px; font-size: 14px; line-height: 22.400px; color: #6c757d; height: 192px; letter-spacing: -0.2px; }
.about h4 { font-size: 14px; font-weight: 600; line-height: 22px; margin-bottom: 6px; letter-spacing: .15px; }

.share { display: flex; justify-content: space-around; padding: 16px; height: 68.400px; }
.share .btn { padding-top: 2px; }
.share .btn-line { width: 108px; }
.share .btn-fb { gap: 5px; }
.share .btn-fb .ic { width: 9px; }
.share .btn-mail { width: 84px; height: 36px; color: #5bc8f0; padding-left: 12px; padding-right: 14px; }
.share .btn-copy { width: 119px; color: #2f6fca; border-color: #2f6fca; }
.ic-l { width: 17.500px; }

.map { position: relative; height: 306.400px; overflow: hidden; letter-spacing: 0; }
.map-svg { display: block; width: 408px; height: 306px; }
.beige { fill: #ece5d8; }
.pink { fill: #f6e0da; }
.park { fill: #bfe3c8; stroke: #aad8b8; }
.track { fill: none; stroke: #d3ecd9; stroke-width: 1.500; }
.water { fill: #a6d9ec; }
.green-dot { fill: #c2e6ca; }
.road { fill: none; stroke: #c3ccd8; stroke-width: 4; }
.road-sm { fill: none; stroke: #c9d2dc; stroke-width: 2.200; }
.boundary { fill: none; stroke: #d9534f; stroke-width: 1.500; stroke-dasharray: 1.500 1.300; }
.map text { font-family: Roboto, sans-serif; }
.map .t-area { font-size: 10px; font-weight: 500; letter-spacing: 1.200px; fill: #5c6670; }
.map .t-dark { font-size: 11px; fill: #3c444c; }
.map .t-poi text { font-size: 14px; fill: #6b8390; }
.map .t-st { font-size: 10.500px; fill: #4c5660; }
.map .t-purple { font-size: 14px; fill: #9334e6; }
.map .t-red { font-size: 14px; fill: #d63a3f; }
.map .t-ch { font-size: 14px; fill: #1a73e8; }
.map .t-h { font-size: 13px; font-weight: 700; fill: #fff; text-anchor: middle; }
.map .t-google { font-family: "Liberation Sans", sans-serif; font-size: 15px; }
.map .t-foot { font-size: 10px; fill: #222; }
.map-info { position: absolute; left: 10px; top: 10px; width: 217px; height: 85px; background: #fff; box-shadow: 0 1px 4px rgba(0,0,0,.3); padding: 10px 12px 8px; font-family: Roboto, sans-serif; display: flex; flex-direction: column; }
.map-info strong { font-size: 14px; font-weight: 500; color: #000; line-height: 18px; }
.map-info span { font-size: 12px; color: #5b5b5b; line-height: 16px; margin-top: 3px; }
.map-info a { font-size: 12px; color: #1a73e8; line-height: 16px; margin-top: 13px; }
```
